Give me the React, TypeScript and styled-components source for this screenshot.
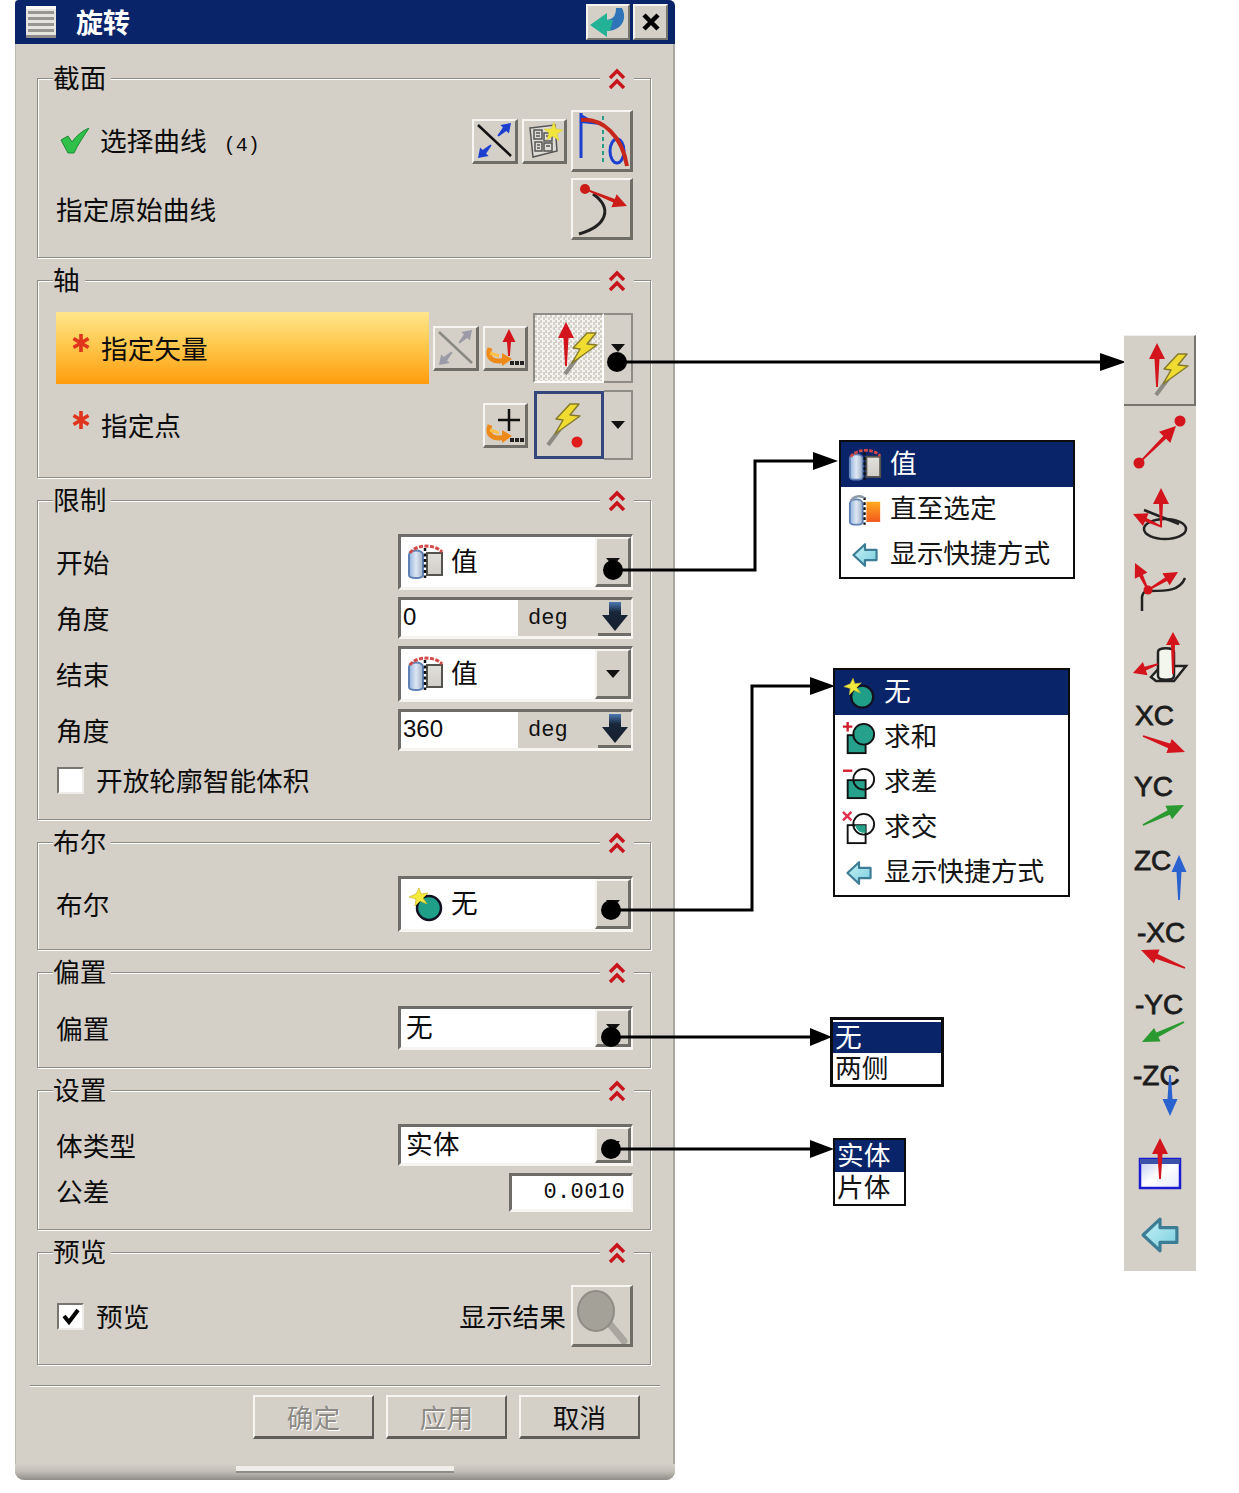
import React from "react";
import styled, { createGlobalStyle } from "styled-components";

const GlobalStyle = createGlobalStyle`
  html, body {
    margin: 0;
    background: #fff;
    font-family: "Noto Sans CJK SC", "Liberation Sans", sans-serif;
    color: #0c0c0c;
  }
`;

const BG = "#d4d0c8";
const NAVY = "#0a246a";
const RED = "#d4141c";
const GREEN = "#2a9a30";
const BLUE = "#2a62d0";

const Canvas = styled.div`
  position: relative;
  width: 1239px;
  height: 1493px;
  overflow: hidden;
`;
const Dialog = styled.div`
  position: absolute;
  left: 15px;
  top: 0;
  width: 660px;
  height: 1480px;
  display: flex;
  flex-direction: column;
  background: ${BG};
  border-radius: 4px 6px 9px 9px;
  box-shadow: inset -2px 0 0 #a9a7a1, inset 1px 0 0 #bdbab3;
  overflow: hidden;
`;
const TitleBar = styled.div`
  height: 44px;
  flex: none;
  display: flex;
  align-items: center;
  background: ${NAVY};
  padding: 0 7px 0 11px;
`;
const TitleText = styled.span`
  color: #fff;
  font-size: 27px;
  font-weight: 700;
  line-height: 44px;
  margin-left: 20px;
  flex: 1;
`;
const TitleButton = styled.div<{ $w: number }>`
  width: ${(p) => p.$w}px;
  height: 36px;
  margin-left: 3px;
  box-sizing: border-box;
  display: flex;
  align-items: center;
  justify-content: center;
  background: ${BG};
  border-top: 2px solid #f4f3ef;
  border-left: 2px solid #f4f3ef;
  border-right: 2px solid #77756f;
  border-bottom: 2px solid #77756f;
`;
const Groups = styled.div`
  display: flex;
  flex-direction: column;
  gap: 22px;
  padding: 34px 24px 0 22px;
`;
const Group = styled.div`
  border: 1px solid #8e8c86;
  box-shadow: inset 1px 1px 0 #fff, 1px 1px 0 #fff;
  padding: 0 17px 17px 18px;
`;
const Head = styled.div`
  height: 30px;
  margin: -15px -1px 0 -4px;
  display: flex;
  justify-content: space-between;
  align-items: center;
`;
const Legend = styled.span`
  background: ${BG};
  font-size: 26.7px;
  height: 30px;
  line-height: 25px;
  padding: 0 5px 0 0;
  margin-left: 1px;
`;
const Collapse = styled.span`
  background: ${BG};
  height: 30px;
  width: 34px;
  display: flex;
  align-items: center;
  justify-content: center;
`;
const Rows = styled.div<{ $top: number; $gap?: number }>`
  display: flex;
  flex-direction: column;
  padding-top: ${(p) => p.$top}px;
  gap: ${(p) => p.$gap ?? 7}px;
`;
const Row = styled.div<{ $h: number }>`
  height: ${(p) => p.$h}px;
  display: flex;
  align-items: center;
`;
const Label = styled.span`
  font-size: 26.7px;
  line-height: 32px;
  white-space: nowrap;
`;
const PickLabel = styled(Label)`
  margin-top: 3px;
`;
const ToleranceLabel = styled(Label)`
  margin-top: -3px;
`;
const Spacer = styled.div`
  flex: 1;
`;
const Count = styled.span`
  font-family: "Liberation Mono", monospace;
  font-size: 20px;
  margin-left: 17px;
`;
const CheckSlot = styled.span`
  width: 44px;
  flex: none;
  display: flex;
  padding-left: 4px;
  box-sizing: border-box;
`;
const StarSlot = styled.span`
  width: 45px;
  flex: none;
  box-sizing: border-box;
  padding: 0 0 10px 16px;
  display: flex;
`;
const Highlight = styled.div`
  width: 373px;
  height: 72px;
  display: flex;
  align-items: center;
  background: linear-gradient(#ffe68c 0%, #ffc94e 45%, #ff9c0c 100%);
`;
const Bevel = styled.div<{ $w: number; $h: number; $ml?: number }>`
  width: ${(p) => p.$w}px;
  height: ${(p) => p.$h}px;
  margin-left: ${(p) => p.$ml ?? 0}px;
  box-sizing: border-box;
  flex: none;
  display: flex;
  align-items: center;
  justify-content: center;
  background: ${BG};
  border-top: 2px solid #f6f5f1;
  border-left: 2px solid #f6f5f1;
  border-right: 3px solid #6f6d68;
  border-bottom: 3px solid #6f6d68;
`;
const PressedTool = styled.div`
  width: 71px;
  height: 70px;
  margin-left: 5px;
  box-sizing: border-box;
  flex: none;
  background: repeating-conic-gradient(#f3f2ef 0 25%, #d4d0c8 0 50%) 0 0 / 5px 5px;
  border-top: 2px solid #8e8c86;
  border-left: 2px solid #8e8c86;
  border-right: 2px solid #fff;
  border-bottom: 2px solid #fff;
`;
const FocusTool = styled.div`
  width: 70px;
  height: 68px;
  margin-left: 6px;
  box-sizing: border-box;
  flex: none;
  border: 3px solid #33477c;
`;
const SplitArrow = styled.div<{ $h: number }>`
  width: 29px;
  height: ${(p) => p.$h}px;
  box-sizing: border-box;
  flex: none;
  display: flex;
  align-items: center;
  justify-content: center;
  border: 2px solid #8e8c86;
  border-left: none;
`;
const Caret = styled.span`
  width: 0;
  height: 0;
  border-left: 7px solid transparent;
  border-right: 7px solid transparent;
  border-top: 8px solid #111;
`;
const Sunken = styled.div<{ $w?: number }>`
  width: ${(p) => p.$w ?? 235}px;
  height: 100%;
  box-sizing: border-box;
  flex: none;
  display: flex;
  align-items: center;
  border-top: 3px solid #6e6c68;
  border-left: 3px solid #6e6c68;
  border-right: 2px solid #f6f5f1;
  border-bottom: 3px solid #f6f5f1;
  background: #fff;
`;
const SelectValue = styled.div`
  flex: 1;
  display: flex;
  align-items: center;
  gap: 7px;
  padding-left: 6px;
  font-size: 26.7px;
`;
const ValueText = styled.span`
  line-height: 32px;
  margin-top: -4px;
`;
const PlainValue = styled(SelectValue)`
  padding-left: 5px;
`;
const SelectButton = styled.div`
  width: 36px;
  align-self: stretch;
  box-sizing: border-box;
  flex: none;
  display: flex;
  align-items: center;
  justify-content: center;
  background: ${BG};
  border-top: 2px solid #f6f5f1;
  border-left: 2px solid #f6f5f1;
  border-right: 3px solid #6f6d68;
  border-bottom: 3px solid #6f6d68;
`;
const NumberField = styled.div`
  width: 117px;
  align-self: stretch;
  flex: none;
  background: #fff;
  font-family: "Liberation Sans", sans-serif;
  font-size: 24px;
  line-height: 34px;
  padding-left: 2px;
  box-sizing: border-box;
`;
const Unit = styled.div`
  flex: 1;
  align-self: stretch;
  background: ${BG};
  font-family: "Liberation Mono", monospace;
  font-size: 22px;
  line-height: 38px;
  padding-left: 10px;
  color: #111;
`;
const Spin = styled.div`
  width: 33px;
  align-self: stretch;
  box-sizing: border-box;
  flex: none;
  display: flex;
  align-items: center;
  justify-content: center;
  background: ${BG};
  border-bottom: 3px solid #6f6d68;
`;
const ToleranceText = styled.div`
  flex: 1;
  font-family: "Liberation Mono", monospace;
  font-size: 22px;
  letter-spacing: 0.4px;
  text-align: right;
  padding-right: 6px;
`;
const CheckBox = styled.span`
  width: 27px;
  height: 27px;
  box-sizing: border-box;
  flex: none;
  margin-left: 1px;
  margin-right: 12px;
  display: flex;
  align-items: center;
  justify-content: center;
  background: #fff;
  border-top: 2px solid #77756f;
  border-left: 2px solid #77756f;
  border-right: 2px solid #eeece8;
  border-bottom: 2px solid #eeece8;
`;
const ResultLabel = styled(Label)`
  margin-right: 5px;
`;
const Divider = styled.div`
  height: 1px;
  margin: 20px 15px 0;
  background: #8e8c86;
  box-shadow: 0 1px 0 #fff;
`;
const ActionRow = styled.div`
  display: flex;
  justify-content: flex-end;
  gap: 12px;
  margin-top: 9px;
  padding-right: 35px;
`;
const ActionButton = styled.div<{ $off?: boolean }>`
  width: 121px;
  height: 44px;
  box-sizing: border-box;
  display: flex;
  align-items: center;
  justify-content: center;
  font-size: 26.7px;
  color: ${(p) => (p.$off ? "#8c8a85" : "#111")};
  text-shadow: ${(p) => (p.$off ? "1px 1px 0 #fff" : "none")};
  border-top: 2px solid #f6f5f1;
  border-left: 2px solid #f6f5f1;
  border-right: 2px solid #5f5d59;
  border-bottom: 3px solid #5f5d59;
`;
const Footer = styled.div`
  margin-top: auto;
  height: 16px;
  display: flex;
  justify-content: center;
  background: linear-gradient(${BG} 0%, #c2bfb8 45%, #8f8d88 100%);
`;
const Grip = styled.div`
  width: 218px;
  height: 5px;
  margin-top: 2px;
  background: #efeeea;
  border-bottom: 2px solid #8e8c86;
`;
const Overlay = styled.svg`
  position: absolute;
  left: 0;
  top: 0;
  pointer-events: none;
`;
const Popup = styled.div<{ $x: number; $y: number; $w: number; $b?: number; $pt?: number }>`
  position: absolute;
  left: ${(p) => p.$x}px;
  top: ${(p) => p.$y}px;
  width: ${(p) => p.$w}px;
  box-sizing: border-box;
  border: ${(p) => p.$b ?? 2}px solid #0c0c0c;
  padding-top: ${(p) => p.$pt ?? 0}px;
  background: #fff;
`;
const MenuItem = styled.div<{ $on?: boolean; $h?: number }>`
  height: ${(p) => p.$h ?? 45}px;
  display: flex;
  align-items: center;
  gap: 8px;
  padding-left: 5px;
  background: ${(p) => (p.$on ? NAVY : "#fff")};
  color: ${(p) => (p.$on ? "#fff" : "#141414")};
  font-size: 26.7px;
`;
const MenuText = styled.span`
  line-height: 32px;
  margin-top: -6px;
`;
const IconSlot = styled.span`
  width: 36px;
  flex: none;
  display: flex;
  justify-content: center;
  padding-left: 2px;
  box-sizing: border-box;
`;
const ListItem = styled(MenuItem)`
  padding-left: 2px;
  line-height: 28px;
  align-items: flex-start;
`;
const Toolbar = styled.div`
  position: absolute;
  left: 1124px;
  top: 335px;
  width: 72px;
  height: 936px;
  background: ${BG};
`;
const ToolbarHead = styled.div`
  height: 71px;
  margin-bottom: 3px;
  padding-left: 2px;
  box-sizing: border-box;
  border-right: 2px solid #77756f;
  border-bottom: 2px solid #77756f;
  border-top: 1px solid #f0efeb;
`;
const ToolItem = styled.div`
  position: relative;
  height: 71.8px;
  box-sizing: border-box;
`;
const AxisLabel = styled.span<{ $x: number; $y: number }>`
  display: block;
  padding: ${(p) => p.$y}px 0 0 ${(p) => p.$x}px;
  font-family: "Liberation Sans", sans-serif;
  font-size: 28px;
  line-height: 28px;
  color: #1c1c1c;
  -webkit-text-stroke: 0.8px #1c1c1c;
`;
const AxisGlyph = styled.svg`
  position: absolute;
  left: 0;
  top: 0;
`;

type ArrowProps = { x1: number; y1: number; x2: number; y2: number; c: string; hl?: number; hw?: number; w?: number };

const Arrow = ({ x1, y1, x2, y2, c, hl = 14, hw = 7, w = 2 }: ArrowProps) => {
  const len = Math.hypot(x2 - x1, y2 - y1);
  const ux = (x2 - x1) / len;
  const uy = (y2 - y1) / len;
  const nx = -uy;
  const ny = ux;
  const bx = x2 - ux * hl;
  const by = y2 - uy * hl;
  const pts = [
    [x1 + nx * 0.9, y1 + ny * 0.9],
    [bx + nx * w, by + ny * w],
    [bx + nx * hw, by + ny * hw],
    [x2, y2],
    [bx - nx * hw, by - ny * hw],
    [bx - nx * w, by - ny * w],
    [x1 - nx * 0.9, y1 - ny * 0.9],
  ]
    .map((p) => p.map((v) => v.toFixed(1)).join(","))
    .join(" ");
  return <polygon points={pts} fill={c} />;
};

const Bolt = ({ x = 0, y = 0 }: { x?: number; y?: number }) => (
  <g transform={`translate(${x} ${y})`}>
    <line x1="5" y1="24" x2="-7" y2="40" stroke="#8c8a84" strokeWidth="4" />
    <polygon
      points="15,-1 1,14 8,15 0,29 25,11 15,10 24,-1"
      fill="#f0dc30"
      stroke="#857a2c"
      strokeWidth="1.5"
      strokeLinejoin="round"
    />
  </g>
);

const MenuGlyph = () => (
  <svg width="30" height="32" viewBox="0 0 30 32">
    <rect width="30" height="32" fill="#e6e4df" />
    {[5, 11, 17, 23].map((y) => (
      <rect key={y} x="2" y={y} width="26" height="3" fill="#989692" />
    ))}
    <rect width="30" height="3" fill="#f8f8f5" />
    <rect y="29" width="30" height="3" fill="#8c8a86" />
  </svg>
);

const ReturnGlyph = () => (
  <svg width="40" height="32" viewBox="0 0 40 32">
    <path d="M34 2 C40 14 33 25 18 25 L17 14 C25 14 28 10 28 2 Z" fill="#2f74b8" />
    <path d="M19 7 L19 31 L2 19 Z" fill="#23b295" />
    <path d="M19 14 L25 14 L22 25 L19 25 Z" fill="#23b295" />
  </svg>
);

const CloseGlyph = () => (
  <svg width="20" height="20" viewBox="0 0 20 20">
    <path d="M3 3 L17 17 M17 3 L3 17" stroke="#000" strokeWidth="4.5" />
  </svg>
);

const Chevrons = () => (
  <svg width="18" height="22" viewBox="0 0 18 22" fill="none" stroke="#c8141c" strokeWidth="3.5">
    <path d="M2 10 L9 3 L16 10" />
    <path d="M2 20 L9 13 L16 20" />
  </svg>
);

const CheckGlyph = () => (
  <svg width="30" height="26" viewBox="0 0 30 26">
    <path d="M1 12 L8 8 L12 14 C16 8 22 3 29 0 C24 8 18 16 14 25 L8 25 Z" fill="#2fc04a" stroke="#1c8a34" strokeWidth="1" />
  </svg>
);

const FlipGlyph = ({ muted }: { muted?: boolean }) => {
  const a = muted ? "#9b9ba8" : "#1c3fd0";
  return (
    <svg width="41" height="39" viewBox="0 0 41 39">
      <line x1="4" y1="4" x2="37" y2="35" stroke={muted ? "#8a8a84" : "#111"} strokeWidth="2.5" />
      <Arrow x1={24} y1={15} x2={37} y2={2} c={a} hl={9} hw={6} w={2.5} />
      <Arrow x1={17} y1={24} x2={4} y2={37} c={a} hl={9} hw={6} w={2.5} />
    </svg>
  );
};

const SectionGlyph = () => (
  <svg width="39" height="39" viewBox="0 0 39 39" fill="none" stroke="#555" strokeWidth="1.5">
    <path d="M5 7 L30 4 L32 30 L8 36 Z" fill="#dedcd6" />
    <rect x="9" y="9" width="8" height="9" />
    <rect x="19" y="12" width="8" height="8" />
    <rect x="10" y="21" width="7" height="9" />
    <rect x="19" y="22" width="8" height="8" />
    <path d="M11 12 H15 M11 15 H15 M21 15 H25 M12 24 H15 M12 27 H15 M21 25 H25" />
    <polygon points="29,1 31,8 38,9 32,13 34,20 28,15 22,19 24,12 19,8 26,8" fill="#f2e63c" stroke="#d9c92c" strokeWidth="0.5" />
  </svg>
);

const CurveGlyph = () => (
  <svg width="57" height="57" viewBox="0 0 57 57" fill="none">
    <path d="M8 1 L8 46" stroke="#1c3fd0" strokeWidth="3" />
    <polygon points="8,2 28,13 8,11" fill="#1c3fd0" />
    <path d="M30 4 L30 50" stroke="#2a9a8a" strokeWidth="2" strokeDasharray="4 3" />
    <ellipse cx="44" cy="39" rx="7" ry="12" stroke="#1c3fd0" strokeWidth="3" />
    <path d="M8 8 C30 6 49 24 54 54" stroke="#c8281c" strokeWidth="4" />
  </svg>
);

const OriginGlyph = () => (
  <svg width="57" height="57" viewBox="0 0 57 57" fill="none">
    <path d="M20 14 C40 28 34 46 6 54" stroke="#222" strokeWidth="3" />
    <circle cx="12" cy="9" r="5" fill="#cc1c18" />
    <Arrow x1={12} y1={9} x2={54} y2={26} c="#cc1c18" hl={14} hw={7} w={2} />
  </svg>
);

const BranchGlyph = ({ plus }: { plus?: boolean }) => (
  <svg width="40" height="39" viewBox="0 0 40 39" fill="none">
    {plus ? (
      <path d="M24 4 L24 26 M13 15 L35 15" stroke="#111" strokeWidth="2.5" />
    ) : (
      <Arrow x1={24} y1={28} x2={24} y2={1} c="#d4141c" hl={13} hw={6.5} w={2} />
    )}
    <path d="M5 20 C1 31 9 35 21 32" stroke="#ee8a1a" strokeWidth="5" />
    <path d="M5 25 L14 28" stroke="#ffc04a" strokeWidth="3" />
    <polygon points="17,25 27,31 17,38" fill="#ee8a1a" />
    <rect x="25" y="33" width="4" height="4" fill="#222" />
    <rect x="30" y="33" width="4" height="4" fill="#222" />
    <rect x="35" y="33" width="4" height="4" fill="#222" />
  </svg>
);

const VectorBoltGlyph = () => (
  <svg width="68" height="66" viewBox="0 0 68 66">
    <Arrow x1={31} y1={51} x2={31} y2={7} c="#d4141c" hl={16} hw={8} w={2.5} />
    <Bolt x={37} y={19} />
  </svg>
);

const PointBoltGlyph = () => (
  <svg width="64" height="62" viewBox="0 0 64 62">
    <Bolt x={18} y={11} />
    <circle cx="40" cy="48" r="5.5" fill="#e01c1c" />
  </svg>
);

const ValueGlyph = ({ orange }: { orange?: boolean }) => (
  <svg width="37" height="36" viewBox="0 0 37 36" fill="none">
    <defs>
      <linearGradient id={orange ? "fillO" : "fillV"} x1="0" x2="0" y1="0" y2="1">
        <stop offset="0" stopColor={orange ? "#ffaa22" : "#e2e0da"} />
        <stop offset="1" stopColor={orange ? "#f2581c" : "#cfcdc6"} />
      </linearGradient>
      <linearGradient id="cyl" x1="0" x2="1" y1="0" y2="0">
        <stop offset="0" stopColor="#8fb2e0" />
        <stop offset="0.5" stopColor="#dfe6f2" />
        <stop offset="1" stopColor="#9fb0c8" />
      </linearGradient>
    </defs>
    <path d="M2 11 C2 5 16 5 16 11 L16 31 C16 35 2 35 2 31 Z" fill="url(#cyl)" stroke="#5f80b4" strokeWidth="2" />
    <rect x="20" y="9" width="15" height="22" fill={`url(#${orange ? "fillO" : "fillV"})`} stroke={orange ? "none" : "#55534e"} strokeWidth="2" />
    <path d="M18 4 L18 34" stroke="#111" strokeWidth="2.5" strokeDasharray="3 2.5" />
    {!orange && <path d="M3 9 C9 0 28 0 35 8" stroke="#d04848" strokeWidth="3" strokeDasharray="4 1.5" />}
    {orange && <path d="M3 8 C7 2 14 2 18 5" stroke="#8a98a8" strokeWidth="2.5" />}
  </svg>
);

const BackGlyph = ({ size = 26 }: { size?: number }) => (
  <svg width={size} height={size} viewBox="0 0 36 36">
    <defs>
      <linearGradient id={`back${size}`} x1="0" x2="1" y1="0" y2="1">
        <stop offset="0" stopColor="#c8f2f6" />
        <stop offset="1" stopColor="#78cede" />
      </linearGradient>
    </defs>
    <polygon points="2,18 18,3 18,11 34,11 34,25 18,25 18,33" fill={`url(#back${size})`} stroke="#3c7c94" strokeWidth="3" strokeLinejoin="round" />
  </svg>
);

const BallGlyph = () => (
  <svg width="37" height="36" viewBox="0 0 37 36">
    <circle cx="22" cy="22" r="12" fill="#1f9e88" stroke="#112" strokeWidth="2.5" />
    <polygon points="12,2 14,8 21,7 16,12 20,18 13,15 8,20 9,13 2,11 9,8" fill="#f2ea3c" stroke="#c8b82c" strokeWidth="0.7" />
  </svg>
);

const BooleanGlyph = ({ kind }: { kind: "add" | "sub" | "cross" }) => {
  const teal = "#25a18c";
  return (
    <svg width="36" height="36" viewBox="0 0 36 36" fill="none">
      {kind === "add" && <path d="M1 6 L11 6 M6 1 L6 11" stroke="#d01c2c" strokeWidth="2.5" />}
      {kind === "sub" && <path d="M1 5 L11 5" stroke="#d01c2c" strokeWidth="2.5" />}
      {kind === "cross" && <path d="M1 1 L10 10 M10 1 L1 10" stroke="#e0304c" strokeWidth="2.5" />}
      <rect x="6" y="15" width="19" height="19" fill={kind === "cross" ? "#fff" : teal} stroke="#111" strokeWidth="2" />
      <circle cx="23" cy="14" r="11" fill={kind === "add" ? teal : "none"} stroke="#111" strokeWidth="2" />
      {kind === "cross" && <path d="M14 15 L25 15 L25 23 C20 24 15 20 14 15 Z" fill={teal} />}
    </svg>
  );
};

const SpinArrow = () => (
  <svg width="28" height="31" viewBox="0 0 28 31">
    <defs>
      <linearGradient id="spin" x1="0" x2="0" y1="0" y2="1">
        <stop offset="0" stopColor="#4c78b4" />
        <stop offset="0.35" stopColor="#18263a" />
        <stop offset="1" stopColor="#16202c" />
      </linearGradient>
    </defs>
    <path d="M8 1 H20 V14 H27 L14 30 L1 14 H8 Z" fill="url(#spin)" />
  </svg>
);

const MagnifierGlyph = () => (
  <svg width="57" height="57" viewBox="0 0 57 57" fill="none">
    <line x1="36" y1="36" x2="51" y2="54" stroke="#a8a69e" strokeWidth="7" strokeLinecap="round" />
    <ellipse cx="23" cy="24" rx="18" ry="20" fill="#a3a198" stroke="#8e8c84" strokeWidth="2" />
  </svg>
);

const TickGlyph = () => (
  <svg width="18" height="18" viewBox="0 0 18 18">
    <path d="M2 9 L7 15 L16 3" fill="none" stroke="#000" strokeWidth="4" />
  </svg>
);

const RequiredMark = () => (
  <StarSlot>
    <svg width="18" height="18" viewBox="0 0 18 18" stroke="#e0341c" strokeWidth="3.6">
      <path d="M9 0 V18 M1.5 4.5 L16.5 13.5 M16.5 4.5 L1.5 13.5" />
    </svg>
  </StarSlot>
);

const Section = ({ title, children }: { title: string; children: React.ReactNode }) => (
  <Group>
    <Head>
      <Legend>{title}</Legend>
      <Collapse>
        <Chevrons />
      </Collapse>
    </Head>
    {children}
  </Group>
);

const Select = ({ icon, text }: { icon?: React.ReactNode; text: string }) => (
  <Sunken>
    {icon ? (
      <SelectValue>
        {icon}
        <ValueText>{text}</ValueText>
      </SelectValue>
    ) : (
      <PlainValue>
        <ValueText>{text}</ValueText>
      </PlainValue>
    )}
    <SelectButton>
      <Caret />
    </SelectButton>
  </Sunken>
);

const AngleInput = ({ value }: { value: string }) => (
  <Sunken>
    <NumberField>{value}</NumberField>
    <Unit>deg</Unit>
    <Spin>
      <SpinArrow />
    </Spin>
  </Sunken>
);

const Connectors = () => (
  <Overlay width="1239" height="1493" viewBox="0 0 1239 1493" fill="none">
    <g stroke="#000" strokeWidth="3">
      <path d="M617 362 H1104" />
      <path d="M612 570 H755 V461 H818" />
      <path d="M611 910 H752 V686 H816" />
      <path d="M611 1037 H814" />
      <path d="M611 1149 H814" />
    </g>
    <g fill="#000">
      <circle cx="617" cy="362" r="10" />
      <circle cx="613" cy="570" r="10" />
      <circle cx="611" cy="910" r="10" />
      <circle cx="611" cy="1037" r="10" />
      <circle cx="611" cy="1149" r="10" />
      <polygon points="1100,353 1126,362 1100,371" />
      <polygon points="813,452 838,461 813,470" />
      <polygon points="810,677 835,686 810,695" />
      <polygon points="810,1028 832,1037 810,1046" />
      <polygon points="810,1140 834,1149 810,1158" />
    </g>
  </Overlay>
);

const axisItems = [
  { label: "XC", x: 11, y: 6, a: { x1: 19, y1: 40, x2: 61, y2: 56, c: RED } },
  { label: "YC", x: 10, y: 5, a: { x1: 19, y1: 57, x2: 60, y2: 37, c: GREEN } },
  { label: "ZC", x: 10, y: 7, a: { x1: 55, y1: 60, x2: 55, y2: 15, c: BLUE } },
  { label: "-XC", x: 13, y: 7, a: { x1: 61, y1: 56, x2: 17, y2: 38, c: RED } },
  { label: "-YC", x: 11, y: 8, a: { x1: 60, y1: 39, x2: 18, y2: 59, c: GREEN } },
  { label: "-ZC", x: 9, y: 7, a: { x1: 46, y1: 20, x2: 46, y2: 61, c: BLUE } },
];

const VectorToolbar = () => (
  <Toolbar>
    <ToolbarHead>
      <VectorBoltGlyph />
    </ToolbarHead>
    <ToolItem>
      <svg width="72" height="72" viewBox="0 0 72 72">
        <Arrow x1={15} y1={54} x2={52} y2={17} c={RED} hl={16} hw={8} w={2} />
        <circle cx="15" cy="54" r="5.5" fill={RED} />
        <circle cx="56" cy="12" r="5.5" fill={RED} />
      </svg>
    </ToolItem>
    <ToolItem>
      <svg width="72" height="72" viewBox="0 0 72 72" fill="none">
        <ellipse cx="41" cy="48" rx="21" ry="10" stroke="#222" strokeWidth="2.5" />
        <path d="M20 29 L55 43" stroke="#222" strokeWidth="2.5" />
        <Arrow x1={37} y1={46} x2={37} y2={7} c={RED} hl={16} hw={8} w={2} />
        <Arrow x1={38} y1={46} x2={9} y2={33} c={RED} hl={14} hw={7} w={2} />
      </svg>
    </ToolItem>
    <ToolItem>
      <svg width="72" height="72" viewBox="0 0 72 72" fill="none">
        <path d="M18 58 L18 44 C19 38 22 38 26 38 C42 38 56 38 61 25" stroke="#222" strokeWidth="2.5" />
        <Arrow x1={24} y1={37} x2={11} y2={10} c={RED} hl={14} hw={7} w={2} />
        <Arrow x1={24} y1={37} x2={54} y2={19} c={RED} hl={14} hw={7} w={2} />
        <circle cx="24" cy="37" r="4.5" fill={RED} />
      </svg>
    </ToolItem>
    <ToolItem>
      <svg width="72" height="72" viewBox="0 0 72 72" fill="none">
        <path d="M27 53 L37 42 L62 42 L50 57 L32 57 Z" fill="#e6e4de" stroke="#222" strokeWidth="2.5" />
        <path d="M34 28 C34 23 50 23 50 28 L50 52 C50 57 34 57 34 52 Z" fill="#f2f6ec" stroke="#222" strokeWidth="2.5" />
        <Arrow x1={49} y1={50} x2={49} y2={8} c={RED} hl={13} hw={7} w={2} />
        <Arrow x1={34} y1={40} x2={9} y2={49} c={RED} hl={13} hw={7} w={2} />
      </svg>
    </ToolItem>
    {axisItems.map((item) => (
      <ToolItem key={item.label}>
        <AxisLabel $x={item.x} $y={item.y}>
          {item.label}
        </AxisLabel>
        <AxisGlyph width="72" height="72" viewBox="0 0 72 72">
          <Arrow {...item.a} hl={17} hw={7.5} w={2.5} />
        </AxisGlyph>
      </ToolItem>
    ))}
    <ToolItem>
      <svg width="72" height="72" viewBox="0 0 72 72">
        <defs>
          <linearGradient id="plane" x1="0" x2="1" y1="0" y2="1">
            <stop offset="0" stopColor="#bcc8f0" />
            <stop offset="0.5" stopColor="#fff" />
            <stop offset="1" stopColor="#e4e8fa" />
          </linearGradient>
        </defs>
        <rect x="16" y="32" width="40" height="29" fill="url(#plane)" stroke="#1a1ad0" strokeWidth="2.5" />
        <rect x="16" y="32" width="40" height="5" fill="#3c52a8" />
        <Arrow x1={36} y1={52} x2={36} y2={11} c={RED} hl={16} hw={8} w={2.5} />
      </svg>
    </ToolItem>
    <ToolItem>
      <svg width="72" height="72" viewBox="0 0 72 72">
        <g transform="translate(17 17)">
          <BackGlyph size={38} />
        </g>
      </svg>
    </ToolItem>
  </Toolbar>
);

const App = () => (
  <Canvas>
    <GlobalStyle />
    <Dialog>
      <TitleBar>
        <MenuGlyph />
        <TitleText>旋转</TitleText>
        <TitleButton $w={44}>
          <ReturnGlyph />
        </TitleButton>
        <TitleButton $w={35}>
          <CloseGlyph />
        </TitleButton>
      </TitleBar>
      <Groups>
        <Section title="截面">
          <Rows $top={16} $gap={6}>
            <Row $h={62}>
              <CheckSlot>
                <CheckGlyph />
              </CheckSlot>
              <PickLabel>
                选择曲线
                <Count>(4)</Count>
              </PickLabel>
              <Spacer />
              <Bevel $w={46} $h={45}>
                <FlipGlyph />
              </Bevel>
              <Bevel $w={45} $h={45} $ml={4}>
                <SectionGlyph />
              </Bevel>
              <Bevel $w={62} $h={62} $ml={4}>
                <CurveGlyph />
              </Bevel>
            </Row>
            <Row $h={62}>
              <Label>指定原始曲线</Label>
              <Spacer />
              <Bevel $w={62} $h={62}>
                <OriginGlyph />
              </Bevel>
            </Row>
          </Rows>
        </Section>
        <Section title="轴">
          <Rows $top={16} $gap={6}>
            <Row $h={72}>
              <Highlight>
                <RequiredMark />
                <Label>指定矢量</Label>
              </Highlight>
              <Bevel $w={46} $h={45} $ml={4}>
                <FlipGlyph muted />
              </Bevel>
              <Bevel $w={45} $h={45} $ml={4}>
                <BranchGlyph />
              </Bevel>
              <PressedTool>
                <VectorBoltGlyph />
              </PressedTool>
              <SplitArrow $h={70}>
                <Caret />
              </SplitArrow>
            </Row>
            <Row $h={70}>
              <RequiredMark />
              <Label>指定点</Label>
              <Spacer />
              <Bevel $w={45} $h={45}>
                <BranchGlyph plus />
              </Bevel>
              <FocusTool>
                <PointBoltGlyph />
              </FocusTool>
              <SplitArrow $h={70}>
                <Caret />
              </SplitArrow>
            </Row>
          </Rows>
        </Section>
        <Section title="限制">
          <Rows $top={18}>
            <Row $h={56}>
              <Label>开始</Label>
              <Spacer />
              <Select icon={<ValueGlyph />} text="值" />
            </Row>
            <Row $h={42}>
              <Label>角度</Label>
              <Spacer />
              <AngleInput value="0" />
            </Row>
            <Row $h={56}>
              <Label>结束</Label>
              <Spacer />
              <Select icon={<ValueGlyph />} text="值" />
            </Row>
            <Row $h={42}>
              <Label>角度</Label>
              <Spacer />
              <AngleInput value="360" />
            </Row>
            <Row $h={44}>
              <CheckBox />
              <Label>开放轮廓智能体积</Label>
            </Row>
          </Rows>
        </Section>
        <Section title="布尔">
          <Rows $top={18}>
            <Row $h={56}>
              <Label>布尔</Label>
              <Spacer />
              <Select icon={<BallGlyph />} text="无" />
            </Row>
          </Rows>
        </Section>
        <Section title="偏置">
          <Rows $top={18}>
            <Row $h={44}>
              <Label>偏置</Label>
              <Spacer />
              <Select text="无" />
            </Row>
          </Rows>
        </Section>
        <Section title="设置">
          <Rows $top={18}>
            <Row $h={42}>
              <Label>体类型</Label>
              <Spacer />
              <Select text="实体" />
            </Row>
            <Row $h={39}>
              <ToleranceLabel>公差</ToleranceLabel>
              <Spacer />
              <Sunken $w={124}>
                <ToleranceText>0.0010</ToleranceText>
              </Sunken>
            </Row>
          </Rows>
        </Section>
        <Section title="预览">
          <Rows $top={17}>
            <Row $h={62}>
              <CheckBox>
                <TickGlyph />
              </CheckBox>
              <Label>预览</Label>
              <Spacer />
              <ResultLabel>显示结果</ResultLabel>
              <Bevel $w={62} $h={62}>
                <MagnifierGlyph />
              </Bevel>
            </Row>
          </Rows>
        </Section>
      </Groups>
      <Divider />
      <ActionRow>
        <ActionButton $off>确定</ActionButton>
        <ActionButton $off>应用</ActionButton>
        <ActionButton>取消</ActionButton>
      </ActionRow>
      <Footer>
        <Grip />
      </Footer>
    </Dialog>
    <Connectors />
    <Popup $x={839} $y={440} $w={236}>
      <MenuItem $on>
        <IconSlot>
          <ValueGlyph />
        </IconSlot>
        <MenuText>值</MenuText>
      </MenuItem>
      <MenuItem>
        <IconSlot>
          <ValueGlyph orange />
        </IconSlot>
        <MenuText>直至选定</MenuText>
      </MenuItem>
      <MenuItem>
        <IconSlot>
          <BackGlyph />
        </IconSlot>
        <MenuText>显示快捷方式</MenuText>
      </MenuItem>
    </Popup>
    <Popup $x={833} $y={668} $w={237}>
      <MenuItem $on>
        <IconSlot>
          <BallGlyph />
        </IconSlot>
        <MenuText>无</MenuText>
      </MenuItem>
      <MenuItem>
        <IconSlot>
          <BooleanGlyph kind="add" />
        </IconSlot>
        <MenuText>求和</MenuText>
      </MenuItem>
      <MenuItem>
        <IconSlot>
          <BooleanGlyph kind="sub" />
        </IconSlot>
        <MenuText>求差</MenuText>
      </MenuItem>
      <MenuItem>
        <IconSlot>
          <BooleanGlyph kind="cross" />
        </IconSlot>
        <MenuText>求交</MenuText>
      </MenuItem>
      <MenuItem>
        <IconSlot>
          <BackGlyph />
        </IconSlot>
        <MenuText>显示快捷方式</MenuText>
      </MenuItem>
    </Popup>
    <Popup $x={830} $y={1017} $w={114} $b={3} $pt={2}>
      <ListItem $on $h={31}>
        无
      </ListItem>
      <ListItem $h={31}>两侧</ListItem>
    </Popup>
    <Popup $x={833} $y={1138} $w={73}>
      <ListItem $on $h={32}>
        实体
      </ListItem>
      <ListItem $h={32}>片体</ListItem>
    </Popup>
    <VectorToolbar />
  </Canvas>
);

export default App;
